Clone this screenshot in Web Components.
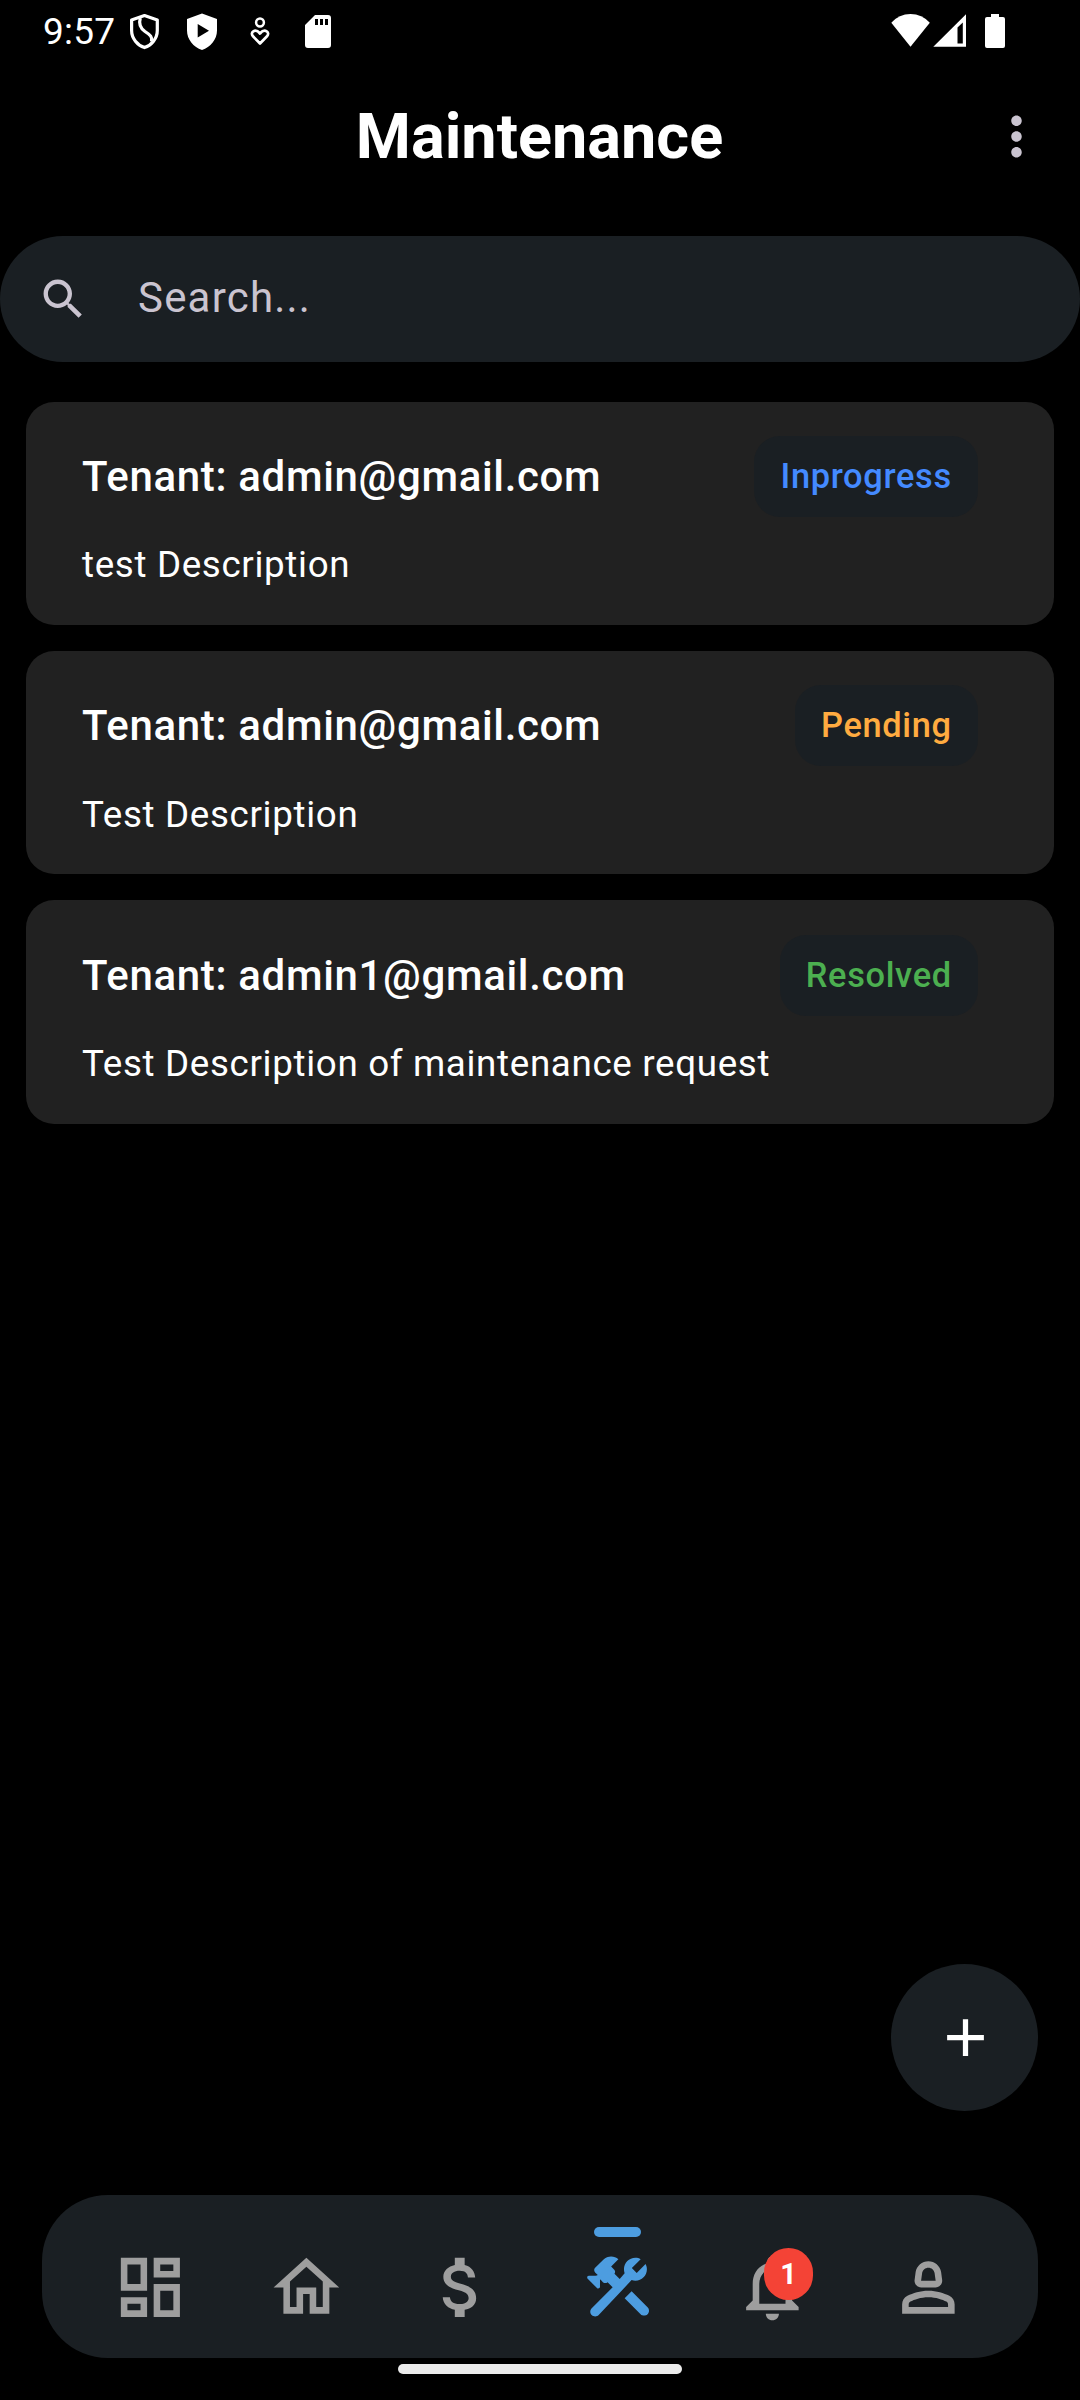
<!DOCTYPE html>
<html lang="en">
<head>
<meta charset="utf-8">
<title>Maintenance</title>
<style>
html,body{margin:0;padding:0;background:#000}
body{width:1080px;height:2400px;overflow:hidden;font-family:Roboto,"Liberation Sans",sans-serif;color:#fff}
</style>
</head>
<body>
<maintenance-screen></maintenance-screen>
<script>
const define = (name, html) => {
  const t = document.createElement('template');
  t.innerHTML = html;
  customElements.define(name, class extends HTMLElement {
    constructor() {
      super();
      this.attachShadow({ mode: 'open' }).appendChild(t.content.cloneNode(true));
    }
  });
};

const ICONS = {
  search: 'M15.5 14h-.79l-.28-.27C15.41 12.59 16 11.11 16 9.5 16 5.91 13.09 3 9.5 3S3 5.91 3 9.5 5.91 16 9.5 16c1.61 0 3.09-.59 4.23-1.57l.27.28v.79l5 4.99L20.49 19l-4.99-5zm-6 0C7.01 14 5 11.99 5 9.5S7.01 5 9.5 5 14 7.01 14 9.5 11.99 14 9.5 14z',
  more: 'M12 8c1.1 0 2-.9 2-2s-.9-2-2-2-2 .9-2 2 .9 2 2 2zm0 2c-1.1 0-2 .9-2 2s.9 2 2 2 2-.9 2-2-.9-2-2-2zm0 6c-1.1 0-2 .9-2 2s.9 2 2 2 2-.9 2-2-.9-2-2-2z',
  add: 'M19 13h-6v6h-2v-6H5v-2h6V5h2v6h6v2z',
  dashboard: 'M19 5v2h-4V5h4M9 5v6H5V5h4m10 8v6h-4v-6h4M9 17v2H5v-2h4M21 3h-8v6h8V3zM11 3H3v10h8V3zm10 8h-8v10h8V11zm-10 4H3v6h8v-6z',
  home: 'M12 5.69l5 4.5V18h-2v-6H9v6H7v-7.81l5-4.5M12 3L2 12h3v8h6v-6h2v6h6v-8h3L12 3z',
  money: 'M11.8 10.9c-2.27-.59-3-1.2-3-2.15 0-1.09 1.01-1.85 2.7-1.85 1.78 0 2.44.85 2.5 2.1h2.21c-.07-1.72-1.12-3.3-3.21-3.81V3h-3v2.16c-1.94.42-3.5 1.68-3.5 3.61 0 2.31 1.91 3.46 4.7 4.13 2.5.6 3 1.48 3 2.41 0 .69-.49 1.79-2.7 1.79-2.06 0-2.87-.92-2.98-2.1h-2.2c.12 2.19 1.76 3.42 3.68 3.83V21h3v-2.15c1.95-.37 3.5-1.5 3.5-3.55 0-2.84-2.43-3.81-4.7-4.4z',
  tools: 'M16.34 13.18l-2.12 2.12 4.86 4.86c.59.59 1.54.59 2.12 0 .59-.59.59-1.54 0-2.12zM17.5 10c1.93 0 3.5-1.57 3.5-3.5 0-.58-.16-1.12-.41-1.6l-2.7 2.7-1.49-1.49 2.7-2.7c-.48-.25-1.02-.41-1.6-.41C15.57 3 14 4.57 14 6.5c0 .41.08.8.21 1.16l-1.5 1.75-1.6-1.6c.3-.4.25-.88-.06-1.2l-.95-.95L12.3 3.45c-1.17-1.17-3.34-1.13-4.51.04L5.22 6.03c-.39.39-.39 1.02 0 1.41l.81.82c-.2.15-.4.18-.7.18H3.3c-.5 0-.65.62-.35.93l2.82 2.82c.31.31.93.14.93-.35V9.5l.35.35.55.55c.39.39 1.02.39 1.41 0l1.55 1.55-6.38 6.38c-.59.59-.59 1.54 0 2.12.59.59 1.54.59 2.12 0L16.34 9.79c.36.13.75.21 1.16.21z',
  bell: 'M12 22c1.1 0 2-.9 2-2h-4c0 1.1.9 2 2 2zm6-6v-5c0-3.07-1.63-5.64-4.5-6.32V4c0-.83-.67-1.5-1.5-1.5s-1.5.67-1.5 1.5v.68C7.64 5.36 6 7.92 6 11v5l-2 2v1h16v-1l-2-2zm-2 1H8v-6c0-2.48 1.51-4.5 4-4.5s4 2.02 4 4.5v6z',
  person: 'M18.39 14.56C16.71 13.7 14.53 13 12 13s-4.71.7-6.39 1.56C4.61 15.07 4 16.1 4 17.22V20h16v-2.78c0-1.12-.61-2.15-1.61-2.66zM18 18H6v-.78c0-.38.2-.72.52-.88C7.71 15.73 9.63 15 12 15c2.37 0 4.29.73 5.48 1.34.32.16.52.5.52.88V18zM9.78 12h4.44c1.21 0 2.14-1.06 1.98-2.26l-.32-2.45C15.57 5.39 13.92 4 12 4S8.43 5.39 8.12 7.29L7.8 9.74c-.16 1.2.77 2.26 1.98 2.26zm.32-4.39C10.26 6.67 11.06 6 12 6s1.74.67 1.89 1.61L14.22 10H9.78l.32-2.39z'
};

customElements.define('md-icon', class extends HTMLElement {
  constructor() { super(); this.attachShadow({ mode: 'open' }); }
  connectedCallback() {
    const rule = this.getAttribute('name') === 'tools' ? 'nonzero' : 'evenodd';
    this.shadowRoot.innerHTML = `<style>:host{display:block;flex:none;width:var(--size,63px);height:var(--size,63px)}svg{display:block;width:100%;height:100%}</style>
      <svg viewBox="0 0 24 24" fill="currentColor"><path fill-rule="${rule}" d="${ICONS[this.getAttribute('name')]}"/></svg>`;
  }
});

define('status-bar', `<style>
  :host{display:flex;box-sizing:border-box;height:63px;padding:0 75px 0 43px;justify-content:space-between}
  .left,.right{display:flex;align-items:flex-start}
  time{font-size:37px;line-height:43px;margin-top:10px;width:87px;letter-spacing:.2px;white-space:nowrap}
  svg{display:block;flex:none}
  </style>
  <div class="left"><time>9:57</time>
    <svg width="210" height="63" viewBox="130 0 210 63">
      <path d="M144.5 15.5 157.3 20V30.5C157.3 38.5 151.5 45.2 144.5 47.6 137.5 45.2 131.6 38.5 131.6 30.5V20Z" fill="none" stroke="#fff" stroke-width="3.2" stroke-linejoin="round"/>
      <path d="M140.3 18C138.5 24 140 28 145 31.5 150.5 35 152.5 37 151.5 41.5" fill="none" stroke="#fff" stroke-width="3.2"/>
      <path d="M202 13.5 217 19V30.5C217 39.5 210.5 47 202 50 193.5 47 187 39.5 187 30.5V19ZM197.7 24V37.5L209 30.7Z" fill="#fff" fill-rule="evenodd"/>
      <circle cx="260" cy="22.5" r="3.9" fill="none" stroke="#fff" stroke-width="2.5"/>
      <path d="M260 43.5 253 36.3C249.5 32.5 255 27.8 260 33.5 265 27.8 270.5 32.5 267 36.3Z" fill="none" stroke="#fff" stroke-width="2.7" stroke-linejoin="round"/>
      <path d="M315 15H328Q331 15 331 18V45Q331 48 328 48H308Q305 48 305 45V25ZM315 19V25H318V19ZM320 19V25H323V19ZM325 19V25H328V19Z" fill="#fff" fill-rule="evenodd"/>
    </svg>
  </div>
  <div class="right">
    <svg width="114" height="63" viewBox="891 0 114 63">
      <path d="M891.3 22.8Q899 14 910.5 14T929.8 22.8L910.5 46.7Z" fill="#fff"/>
      <path d="M933.3 46.8 966 14.3V46.8ZM957.5 27.5V43.6H962.8V22.5Z" fill="#fff" fill-rule="evenodd"/>
      <path d="M991 14H999V17H1003Q1005 17 1005 19V46Q1005 48 1003 48H987Q985 48 985 46V19Q985 17 987 17H991Z" fill="#fff"/>
    </svg>
  </div>`);

define('app-bar', `<style>
  :host{display:grid;grid-template-columns:1fr auto 1fr;align-items:center;height:147px;box-sizing:border-box;padding:0 31.6px 0 30.6px}
  h1{grid-column:2;margin:0;font-size:63px;font-weight:700;line-height:74px;white-space:nowrap}
  md-icon{justify-self:end;color:#cac4d0}
  </style><h1><slot></slot></h1><md-icon name="more"></md-icon>`);

define('search-field', `<style>
  :host{display:flex;align-items:center;box-sizing:border-box;height:126px;margin-top:26px;padding-left:36.5px;border-radius:63px;background:#1a1f23;color:#cac4d0}
  md-icon{--size:52.5px}
  span{margin-left:49px;margin-bottom:2px;font-size:42px;line-height:60px;letter-spacing:1.2px}
  </style><md-icon name="search"></md-icon><span><slot></slot></span>`);

define('status-chip', `<style>
  :host{display:flex;align-items:center;height:81px;box-sizing:border-box;padding:0 26.25px 1px;border-radius:26px;background:#1a1f23;font-size:34.4px;font-weight:500;letter-spacing:.66px;white-space:nowrap;color:var(--tone)}
  </style><slot></slot>`);

define('request-card', `<style>
  :host{display:block;box-sizing:border-box;height:223.4px;padding:34.4px 76px 0 56px;border-radius:28px;background:#212121}
  .row{display:flex;justify-content:space-between;align-items:center;height:81px}
  .title{padding-top:.8px;font-size:42px;font-weight:500;line-height:60px;letter-spacing:.66px;white-space:nowrap}
  .desc{margin-top:22.5px;font-size:36.75px;line-height:52px;letter-spacing:.66px;white-space:nowrap}
  </style><div class="row"><div class="title"><slot name="title"></slot></div><slot name="status"></slot></div>
  <div class="desc"><slot></slot></div>`);

define('add-button', `<style>
  :host{display:flex;align-items:center;justify-content:center;box-sizing:border-box;width:147px;height:147px;padding-left:1px;border-radius:50%;background:#1a1f23;color:#fff}
  </style><md-icon name="add"></md-icon>`);

define('nav-item', `<style>
  :host{display:flex;flex-direction:column;align-items:center;flex:1;color:#9e9e9e}
  :host([active]){color:#4d9de0}
  .bar{width:47px;height:10px;margin:32px 0 11px;border-radius:5px}
  :host([active]) .bar{background:currentColor}
  .icon{position:relative;--size:78.75px}
  ::slotted(b){position:absolute;left:30.5px;top:0;width:49px;height:52px;border-radius:26px;background:#f44336;color:#fff;font-size:28.875px;font-weight:700;line-height:52px;text-align:center}
  </style><div class="bar"></div><div class="icon"><slot></slot></div>`);

define('nav-bar', `<style>
  :host{display:flex;box-sizing:border-box;height:163px;margin:0 42px;padding:0 31.8px 0 30.9px;border-radius:66px;background:#1a1f23}
  </style><slot></slot>`);

define('maintenance-screen', `<style>
  :host{display:flex;flex-direction:column;height:2400px;background:#000}
  .list{display:flex;flex-direction:column;gap:26px;padding:39.6px 26px 0}
  .fab{display:flex;justify-content:flex-end;margin-top:auto;padding:0 42px 84px 0}
  .handle{width:284px;height:10px;margin:6px auto 26px;border-radius:5px;background:#ebebeb}
  .blue{--tone:#448aff}.orange{--tone:#ffab40}.green{--tone:#4caf50}
  </style>
  <status-bar></status-bar>
  <app-bar>Maintenance</app-bar>
  <search-field>Search...</search-field>
  <div class="list">
    <request-card><span slot="title">Tenant: admin@gmail.com</span><status-chip slot="status" class="blue">Inprogress</status-chip>test Description</request-card>
    <request-card><span slot="title">Tenant: admin@gmail.com</span><status-chip slot="status" class="orange">Pending</status-chip>Test Description</request-card>
    <request-card><span slot="title">Tenant: admin1@gmail.com</span><status-chip slot="status" class="green">Resolved</status-chip>Test Description of maintenance request</request-card>
  </div>
  <div class="fab"><add-button></add-button></div>
  <nav-bar>
    <nav-item><md-icon name="dashboard"></md-icon></nav-item>
    <nav-item><md-icon name="home"></md-icon></nav-item>
    <nav-item><md-icon name="money"></md-icon></nav-item>
    <nav-item active><md-icon name="tools"></md-icon></nav-item>
    <nav-item><md-icon name="bell"></md-icon><b>1</b></nav-item>
    <nav-item><md-icon name="person"></md-icon></nav-item>
  </nav-bar>
  <div class="handle"></div>`);
</script>
</body>
</html>
